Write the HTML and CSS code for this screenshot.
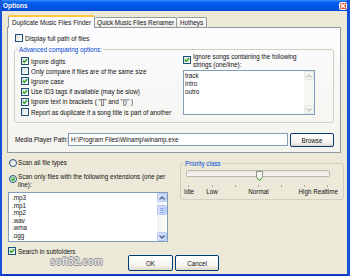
FILE: index.html
```html
<!DOCTYPE html>
<html>
<head>
<meta charset="utf-8">
<link rel="stylesheet" href="styles.css">
</head>
<body>
<div class="window">
  <div class="titlebar">
    <span class="title">Options</span>
    <span class="close"><svg width="6" height="6" viewBox="0 0 6 6"><path d="M1 1L5 5M5 1L1 5" stroke="#fff" stroke-width="1.3"/></svg></span>
  </div>
  <div class="body">
    <div class="tabs">
      <div class="tab active t1">Duplicate Music Files Finder</div>
      <div class="tab t2">Quick Music Files Renamer</div>
      <div class="tab t3">Hotheys</div>
    </div>
    <div class="panel">
      <div class="check top-check"><span class="cb"></span><span class="lbl">Display full path of files</span></div>
      <fieldset class="group adv">
        <legend>Advanced comparing options:</legend>
        <div class="adv-cols">
          <div class="adv-left">
            <div class="check row"><span class="cb on"><svg width="6" height="6" viewBox="0 0 6 6"><path d="M0.8 2.8L2.3 4.3L5.2 1.2" stroke="#21A121" stroke-width="1.3" fill="none"/></svg></span><span class="lbl">Ignore digits</span></div>
            <div class="check row"><span class="cb"></span><span class="lbl">Only compare if files are of the same size</span></div>
            <div class="check row"><span class="cb on"><svg width="6" height="6" viewBox="0 0 6 6"><path d="M0.8 2.8L2.3 4.3L5.2 1.2" stroke="#21A121" stroke-width="1.3" fill="none"/></svg></span><span class="lbl">Ignore case</span></div>
            <div class="check row"><span class="cb on"><svg width="6" height="6" viewBox="0 0 6 6"><path d="M0.8 2.8L2.3 4.3L5.2 1.2" stroke="#21A121" stroke-width="1.3" fill="none"/></svg></span><span class="lbl">Use ID3 tags if available (may be slow)</span></div>
            <div class="check row"><span class="cb on"><svg width="6" height="6" viewBox="0 0 6 6"><path d="M0.8 2.8L2.3 4.3L5.2 1.2" stroke="#21A121" stroke-width="1.3" fill="none"/></svg></span><span class="lbl">Ignore text in brackets ( "[]" and "()" )</span></div>
            <div class="check row"><span class="cb"></span><span class="lbl">Report as duplicate if a song title is part of another</span></div>
          </div>
          <div class="adv-right">
            <div class="check multi"><span class="cb on"><svg width="6" height="6" viewBox="0 0 6 6"><path d="M0.8 2.8L2.3 4.3L5.2 1.2" stroke="#21A121" stroke-width="1.3" fill="none"/></svg></span><span class="lbl">Ignore songs containing the following<br>strings (one/line):</span></div>
            <div class="memo">
              <div class="memo-text">
                <div>track</div>
                <div>intro</div>
                <div>outro</div>
              </div>
              <div class="vscroll disabled">
                <span class="sbtn"><svg width="6" height="4" viewBox="0 0 6 4"><path d="M0.5 3.5L3 1L5.5 3.5" stroke="#C6C6BE" stroke-width="1.2" fill="none"/></svg></span>
                <span class="strack"></span>
                <span class="sbtn"><svg width="6" height="4" viewBox="0 0 6 4"><path d="M0.5 0.5L3 3L5.5 0.5" stroke="#C6C6BE" stroke-width="1.2" fill="none"/></svg></span>
              </div>
            </div>
          </div>
        </div>
      </fieldset>
      <div class="path-row">
        <span class="path-label">Media Player Path:</span>
        <span class="input">H:\Program Files\Winamp\winamp.exe</span>
        <span class="button browse">Browse</span>
      </div>
    </div>
    <div class="lower">
      <div class="lower-left">
        <div class="radio-row r1"><span class="rb"></span><span class="lbl">Scan all file types</span></div>
        <div class="radio-row r2"><span class="rb on"><span class="dot"></span></span><span class="lbl">Scan only files with the following extensions (one per<br>line):</span></div>
        <div class="listbox">
          <div class="list-items">
            <div>.mp3</div>
            <div>.mp1</div>
            <div>.mp2</div>
            <div>.wav</div>
            <div>.wma</div>
            <div>.ogg</div>
          </div>
          <div class="vscroll active">
            <span class="sbtn"><svg width="6" height="4" viewBox="0 0 6 4"><path d="M0.5 3.5L3 1L5.5 3.5" stroke="#4D6185" stroke-width="1.3" fill="none"/></svg></span>
            <span class="thumb"><i></i><i></i><i></i></span>
            <span class="strack"></span>
            <span class="sbtn"><svg width="6" height="4" viewBox="0 0 6 4"><path d="M0.5 0.5L3 3L5.5 0.5" stroke="#4D6185" stroke-width="1.3" fill="none"/></svg></span>
          </div>
        </div>
        <div class="check sub-check"><span class="cb on"><svg width="6" height="6" viewBox="0 0 6 6"><path d="M0.8 2.8L2.3 4.3L5.2 1.2" stroke="#21A121" stroke-width="1.3" fill="none"/></svg></span><span class="lbl">Search in subfolders</span></div>
      </div>
      <div class="lower-right">
        <fieldset class="group prio">
          <legend>Priority class</legend>
          <div class="track">
            <span class="slider-thumb"><svg width="7" height="10" viewBox="0 0 7 10"><path d="M0.5 0.5H6.5V6.8L3.5 9.5L0.5 6.8Z" fill="#F6F6F2" stroke="#8C9088"/><path d="M1 6.9L3.5 9.1L6 6.9" stroke="#3CB43C" stroke-width="1" fill="none"/></svg></span>
          </div>
          <div class="scale ticks">
            <span><i></i></span><span><i></i></span><span><i></i></span><span><i></i></span><span><i></i></span><span><i></i></span><span><i></i></span>
          </div>
          <div class="scale labels">
            <span>Idle</span><span>Low</span><span></span><span>Normal</span><span></span><span class="last">High Realtime</span>
          </div>
        </fieldset>
      </div>
    </div>
    <div class="buttons">
      <span class="button ok">OK</span>
      <span class="button cancel">Cancel</span>
    </div>
  </div>
  <div class="watermark">soft32.com</div>
</div>
</body>
</html>
```

FILE: styles.css
```css
* { box-sizing: border-box; margin: 0; padding: 0; }
html, body { width: 350px; height: 276px; overflow: hidden; }
body {
  font-family: "Liberation Sans", Arial, sans-serif;
  font-size: 6.3px;
  color: #111;
  background: #fff;
}
.window {
  position: relative;
  width: 350px;
  height: 276px;
  display: flex;
  flex-direction: column;
  background: #ECE9D8;
  border-left: 2px solid #1450D8;
  border-right: 3px solid #1450D8;
  border-bottom: 2px solid #0A3CC8;
}
.titlebar {
  height: 11px;
  display: flex;
  align-items: center;
  justify-content: space-between;
  padding: 0 0 0 1px;
  background: linear-gradient(#3E93FF 0%, #0A62F0 18%, #0058EE 45%, #0054E3 75%, #0048D0 100%);
}
.title {
  color: #fff;
  font-weight: bold;
  font-size: 6.5px;
  line-height: 7px;
  text-shadow: 1px 0 0 rgba(0,0,60,0.25);
}
.close {
  width: 8px;
  height: 8px;
  margin-top: 1px;
  border: 1px solid #fff;
  border-radius: 1.5px;
  background: linear-gradient(135deg, #F09A7E, #E0502C 55%, #C63A18);
  display: flex;
  align-items: center;
  justify-content: center;
}
.close svg { display: block; }
.body {
  flex: 1;
  padding: 4px 6px 0 5px;
  display: flex;
  flex-direction: column;
}
.tabs {
  display: flex;
  align-items: flex-end;
  height: 12px;
  margin-left: 1px;
  position: relative;
  z-index: 1;
}
.tab {
  height: 10px;
  border: 1px solid #919B9C;
  border-bottom: none;
  border-radius: 2px 2px 0 0;
  background: linear-gradient(#FFFFFF, #ECEBE6);
  display: flex;
  align-items: center;
  justify-content: center;
  line-height: 7px;
  white-space: nowrap;
}
.tab.active {
  height: 13px;
  margin-bottom: -1px;
  background: #FCFCFE;
  border-top: 2px solid #FFC83C;
  padding-bottom: 1px;
}
.t1 { width: 87px; }
.t2 { width: 82px; border-left: none; }
.t3 { width: 30px; border-left: none; }
.panel {
  height: 126px;
  border: 1px solid #919B9C;
  background: linear-gradient(#FCFCFE, #F4F3EE);
  display: flex;
  flex-direction: column;
}
.check {
  display: flex;
  align-items: center;
  white-space: nowrap;
  line-height: 7px;
}
.cb {
  width: 8px;
  height: 8px;
  flex: none;
  border: 1px solid #1C5180;
  background: linear-gradient(135deg, #DCDCD7, #FFFFFF);
  display: flex;
  align-items: center;
  justify-content: center;
}
.cb svg { display: block; }
.check .lbl { margin-left: 2px; }
.top-check { height: 8px; margin: 6px 0 0 7px; }
.group {
  border: 1px solid #D0D0BF;
  border-radius: 3px;
}
.group legend {
  color: #0046D5;
  line-height: 7px;
  padding: 0 1px;
}
.adv {
  margin: 4px 6px 0 6px;
  padding: 0 17px 5px 6px;
}
.adv legend { margin-left: -3px; }
.adv-cols { display: flex; align-items: flex-start; }
.adv-left { width: 162px; padding-top: 3px; flex: none; }
.row { height: 10.2px; }
.adv-right { flex: 1; }
.multi { align-items: flex-start; line-height: 8px; }
.multi .cb { margin-top: 3px; }
.memo {
  margin-top: 1px;
  width: 132px;
  height: 45px;
  border: 1px solid #7F9DB9;
  background: #fff;
  display: flex;
}
.memo-text { flex: 1; padding: 1px 0 0 1px; line-height: 8px; }
.vscroll {
  width: 10px;
  flex: none;
  display: flex;
  flex-direction: column;
}
.vscroll .strack { flex: 1; }
.sbtn {
  height: 9px;
  flex: none;
  display: flex;
  align-items: center;
  justify-content: center;
  border-radius: 1.5px;
}
.sbtn svg { display: block; }
.disabled { background: #F7F7F4; }
.disabled .sbtn { border: 1px solid #E6E6E0; background: #F4F4F0; }
.active { background: linear-gradient(90deg, #F3F1EC, #FDFDFB); }
.active .sbtn {
  border: 1px solid #B4C8F6;
  background: linear-gradient(90deg, #DCE6FD, #C3D4FB);
}
.thumb {
  height: 10px;
  margin-top: 3px;
  border: 1px solid #B4C8F6;
  border-radius: 1.5px;
  background: linear-gradient(90deg, #D3E0FD, #BCCEFA);
  display: flex;
  flex-direction: column;
  align-items: center;
  justify-content: center;
  gap: 1px;
}
.thumb i { display: block; width: 4px; height: 1px; background: #8FAAE8; }
.path-row {
  display: flex;
  align-items: flex-start;
  margin: 10px 6px 0 7px;
  white-space: nowrap;
}
.path-label { width: 53px; flex: none; line-height: 13px; }
.input {
  flex: 1;
  height: 13px;
  border: 1px solid #7F9DB9;
  background: #fff;
  padding-left: 2px;
  line-height: 11px;
  overflow: hidden;
}
.button {
  height: 14px;
  border: 1px solid #003C74;
  border-radius: 2px;
  background: linear-gradient(#FFFFFF, #F4F3EE 70%, #DDD8CC);
  display: flex;
  align-items: center;
  justify-content: center;
  line-height: 7px;
}
.browse { width: 44px; margin-left: 2px; flex: none; }
.lower { display: flex; align-items: flex-start; }
.lower-left { width: 160px; margin-left: 1px; flex: none; }
.radio-row { display: flex; white-space: nowrap; }
.rb {
  width: 8px;
  height: 8px;
  flex: none;
  margin-left: 1px;
  border: 1px solid #1C5180;
  border-radius: 50%;
  background: linear-gradient(135deg, #DCDCD7, #FFFFFF);
  display: flex;
  align-items: center;
  justify-content: center;
}
.rb .dot {
  width: 4px;
  height: 4px;
  border-radius: 50%;
  background: radial-gradient(circle at 35% 35%, #8BE28B, #21A121 70%);
}
.radio-row .lbl { margin-left: 1px; }
.r1 { height: 9px; margin-top: 5px; align-items: center; line-height: 7px; }
.r2 { margin-top: 6px; align-items: flex-start; line-height: 8px; }
.r2 .rb { margin-top: 2px; }
.listbox {
  margin-top: 3px;
  width: 160px;
  height: 50px;
  border: 1px solid #7F9DB9;
  background: #fff;
  display: flex;
}
.list-items { flex: 1; padding: 1px 0 0 3px; line-height: 7.6px; }
.sub-check { height: 8px; margin-top: 5px; }
.lower-right { width: 161px; margin-left: 12px; flex: none; padding-top: 7px; }
.prio { padding: 0 3px 4px 3px; }
.track {
  position: relative;
  margin: 3px 0 0 2px;
  width: 144px;
  height: 7px;
  border: 1px solid #B8B8AC;
  border-radius: 1.5px;
  background: linear-gradient(#E9E8E1, #F6F5F1);
}
.slider-thumb {
  position: absolute;
  left: 69px;
  top: 0;
}
.slider-thumb svg { display: block; }
.scale {
  display: grid;
  grid-template-columns: repeat(7, 23.17px);
  margin-left: -6.6px;
  width: 162.2px;
}
.scale span { display: flex; justify-content: center; white-space: nowrap; }
.scale span.last { grid-column: 6 / 8; justify-content: flex-end; margin-right: 1.5px; }
.ticks { margin-top: 8px; height: 2px; }
.ticks i { display: block; width: 1px; height: 2px; background: #A5A59A; }
.labels { margin-top: 1px; line-height: 7px; }
.buttons { display: flex; gap: 2px; margin-left: 121px; }
.ok { width: 45px; height: 16px; }
.cancel { width: 44px; height: 16px; }
.watermark {
  position: absolute;
  left: 48px;
  top: 257px;
  font-size: 10px;
  line-height: 10px;
  font-weight: bold;
  color: #E4E4E4;
  text-shadow: -0.6px 0 0 #8E8E8E, 0.6px 0 0 #8E8E8E, 0 -0.6px 0 #8E8E8E, 0 0.6px 0 #8E8E8E;
}
```
